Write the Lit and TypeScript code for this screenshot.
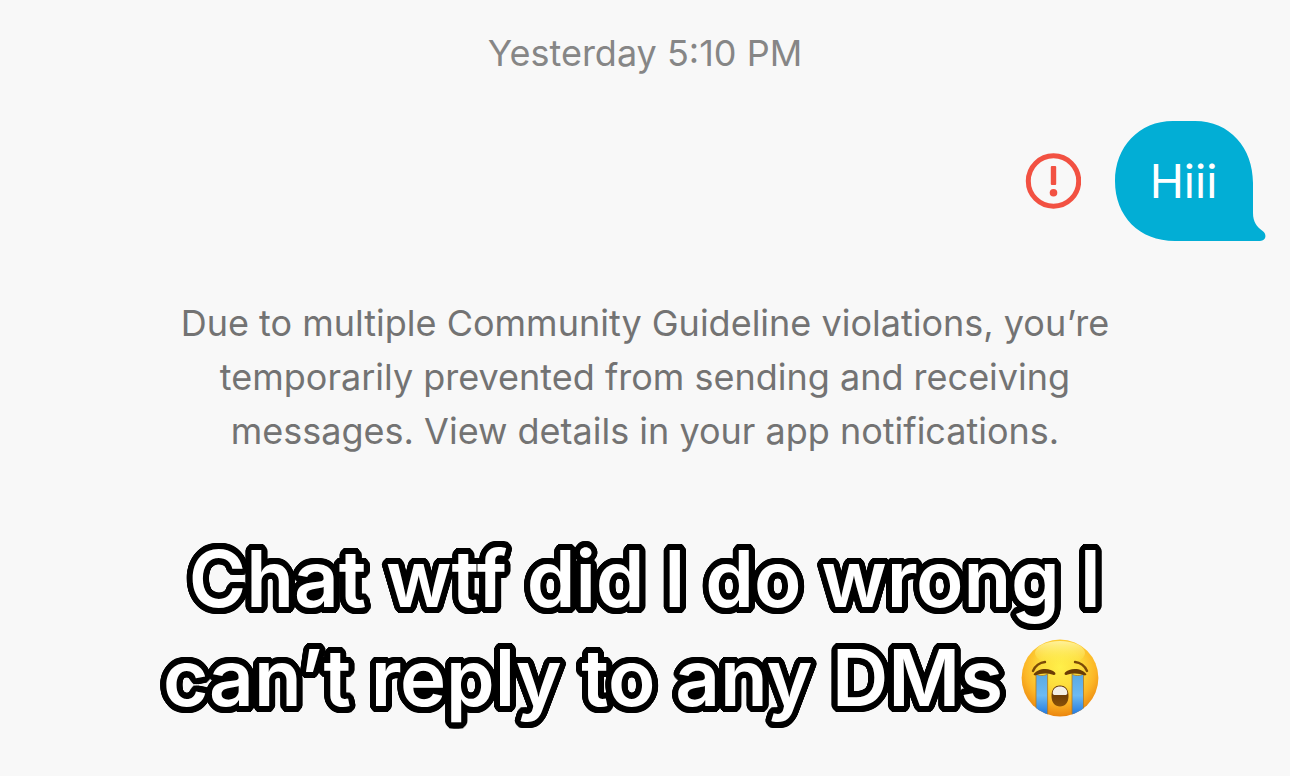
import { LitElement, html, css, unsafeCSS } from "lit";
import { customElement } from "lit/decorators.js";

// A ring of hard shadows gives the caption a round-cornered outline.
const ring = (radius: number, steps: number): string =>
  Array.from({ length: steps }, (_, i) => {
    const a = (i / steps) * Math.PI * 2;
    return `${(Math.cos(a) * radius).toFixed(2)}px ${(Math.sin(a) * radius).toFixed(2)}px 0 #000`;
  }).join(", ");

const outline = unsafeCSS(`${ring(6, 32)}, ${ring(3, 16)}`);

@customElement("failed-icon")
export class FailedIcon extends LitElement {
  static styles = css`
    :host { display: block; }
    .icon { display: block; width: 56px; height: 56px; }
  `;
  render() {
    return html`<svg class="icon" viewBox="0 0 56 56" role="img" aria-label="Not sent">
      <circle cx="28.500" cy="28" r="25.200" fill="none" stroke="#f25142" stroke-width="5" />
      <rect x="25.800" y="13" width="5.400" height="19" rx="1" fill="#f25142" />
      <circle cx="28.500" cy="39.800" r="3.800" fill="#f25142" />
    </svg>`;
  }
}

@customElement("crying-face")
export class CryingFace extends LitElement {
  static styles = css`
    :host { display: inline-block; }
    .face { display: block; width: 78px; height: 78px; }
  `;
  render() {
    return html`<svg class="face" viewBox="0 0 78 78" role="img" aria-label="Loudly crying face">
      <defs>
        <radialGradient id="skin" cx="0.5" cy="0.36" r="0.66">
          <stop offset="0" stop-color="#fff04a" />
          <stop offset="0.4" stop-color="#fddc3c" />
          <stop offset="0.7" stop-color="#fcb626" />
          <stop offset="1" stop-color="#e9800c" />
        </radialGradient>
        <linearGradient id="shine" x1="0" y1="0" x2="0" y2="1">
          <stop offset="0" stop-color="#fff6a8" stop-opacity="0.9" />
          <stop offset="1" stop-color="#fff04a" stop-opacity="0" />
        </linearGradient>
        <linearGradient id="tear" x1="0" y1="0" x2="0" y2="1">
          <stop offset="0" stop-color="#5aa9e4" />
          <stop offset="0.5" stop-color="#6cbaf2" />
          <stop offset="0.95" stop-color="#2379df" />
        </linearGradient>
        <linearGradient id="mouth" x1="0" y1="0" x2="0" y2="1">
          <stop offset="0" stop-color="#5a2c05" />
          <stop offset="1" stop-color="#8a5208" />
        </linearGradient>
        <clipPath id="head"><circle cx="39" cy="39" r="38.400" /></clipPath>
      </defs>
      <circle cx="39" cy="39" r="38.400" fill="url(#skin)" />
      <ellipse cx="39" cy="14" rx="25" ry="12" fill="url(#shine)" />
      <g clip-path="url(#head)">
        <path d="M15 35 C19 37 23 37 26.600 35 V78 H15 Z" fill="url(#tear)" stroke="#b07a20" stroke-width="0.800" />
        <path d="M51 35 C54 37 59 37 62.500 35 V78 H51 Z" fill="url(#tear)" stroke="#b07a20" stroke-width="0.800" />
      </g>
      <path d="M12.500 35.500 C16 29 29 28 34 33.500 C35.200 35 34 36.400 32 35.700 C26 33.800 19 34.300 14 36.600 Z" fill="#6b3d05" />
      <path d="M65.500 35.500 C62 29 49 28 44 33.500 C42.800 35 44 36.400 46 35.700 C52 33.800 59 34.300 64 36.600 Z" fill="#6b3d05" />
      <path d="M12 32 C14 27 19 23.500 24 23" fill="none" stroke="#7b4a08" stroke-width="2.400" stroke-linecap="round" />
      <path d="M66 32 C64 27 59 23.500 54 23" fill="none" stroke="#7b4a08" stroke-width="2.400" stroke-linecap="round" />
      <path d="M39 46.500 C45 46.500 47.500 51 47.500 57 C47.500 63.500 44 67.500 39 67.500 C34 67.500 30.500 63.500 30.500 57 C30.500 51 33 46.500 39 46.500 Z" fill="url(#mouth)" />
      <path d="M39 47.500 C43.500 47.500 46 50 46.300 54 C46.300 55.600 45.400 56 44 56 H34 C32.600 56 31.700 55.600 31.700 54 C32 50 34.500 47.500 39 47.500 Z" fill="#f4efe6" />
    </svg>`;
  }
}

@customElement("message-bubble")
export class MessageBubble extends LitElement {
  static styles = css`
    :host { display: block; }
    .bubble {
      position: relative;
      box-sizing: border-box;
      width: 151px;
      height: 120px;
      padding-right: 14px;
      display: grid;
      place-items: center;
    }
    .shape { position: absolute; inset: 0; width: 100%; height: 100%; }
    .text {
      position: relative;
      margin: 0;
      color: #fff;
      font-size: 46px;
      line-height: 56px;
    }
  `;
  render() {
    return html`<div class="bubble">
      <svg class="shape" viewBox="0 0 151 120" aria-hidden="true">
        <path d="M58 0 H80 C115 0 138 27 138 62 V92 C138 101 142 106 147 109.500 C152.500 113 151 120 145 120 H60 C24 120 0 95 0 60 C0 26 24 0 58 0 Z" fill="#02aed5" />
      </svg>
      <p class="text"><slot></slot></p>
    </div>`;
  }
}

@customElement("app-root")
export class AppRoot extends LitElement {
  static styles = css`
    :host {
      display: block;
      min-height: 100vh;
      background: #f8f8f8;
      font-family: Inter, "Liberation Sans", sans-serif;
    }
    .chat {
      display: flex;
      flex-direction: column;
      padding: 31px 24px 0;
    }
    .time {
      text-align: center;
      color: #868686;
      font-size: 36px;
      line-height: 44px;
    }
    .sent {
      display: flex;
      justify-content: flex-end;
      align-items: center;
      gap: 34px;
      margin-top: 46px;
    }
    .notice {
      margin: 55px 0 0;
      text-align: center;
      color: #737373;
      font-size: 36px;
      line-height: 54px;
    }
    .caption {
      margin: 71px 0 0;
      text-align: center;
      color: #fff;
      font-weight: 600;
      font-size: 78px;
      line-height: 99px;
      text-shadow: ${outline};
    }
    .line { display: block; }
    .last {
      display: flex;
      justify-content: center;
      align-items: center;
      gap: 18px;
      padding-right: 28px;
    }
  `;
  render() {
    return html`<main class="chat">
      <time class="time">Yesterday 5:10 PM</time>
      <div class="sent">
        <failed-icon></failed-icon>
        <message-bubble>Hiii</message-bubble>
      </div>
      <p class="notice">
        <span class="line">Due to multiple Community Guideline violations, you’re</span>
        <span class="line">temporarily prevented from sending and receiving</span>
        <span class="line">messages. View details in your app notifications.</span>
      </p>
      <h1 class="caption">
        <span class="line">Chat wtf did I do wrong I</span>
        <span class="last"><span>can’t reply to any DMs</span><crying-face></crying-face></span>
      </h1>
    </main>`;
  }
}
